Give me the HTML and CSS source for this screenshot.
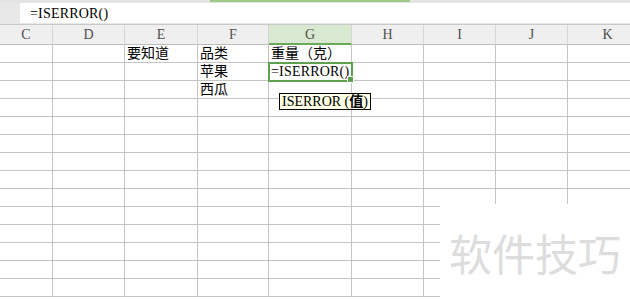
FILE: index.html
```html
<!DOCTYPE html>
<html lang="zh">
<head>
<meta charset="utf-8">
<link rel="stylesheet" href="styles.css">
</head>
<body>
<div class="sheet">
  <div class="topstrip"><div class="tabmark"></div></div>
  <div class="fbar">
    <div class="fleft"></div>
    <div class="finput">=ISERROR()</div>
  </div>
  <div class="row head">
    <div class="c cC">C</div><div class="c cD">D</div><div class="c cE">E</div><div class="c cF">F</div><div class="c cG sel">G</div><div class="c cH">H</div><div class="c cI">I</div><div class="c cJ">J</div><div class="c cK">K</div>
  </div>
  <div class="body">
    <div class="row"><div class="c cC"></div><div class="c cD"></div><div class="c cE">要知道</div><div class="c cF">品类</div><div class="c cG">重量（克）</div><div class="c cH"></div><div class="c cI"></div><div class="c cJ"></div><div class="c cK"></div></div>
    <div class="row"><div class="c cC"></div><div class="c cD"></div><div class="c cE"></div><div class="c cF">苹果</div><div class="c cG edit">=ISERROR()<span class="handle"></span></div><div class="c cH"></div><div class="c cI"></div><div class="c cJ"></div><div class="c cK"></div></div>
    <div class="row"><div class="c cC"></div><div class="c cD"></div><div class="c cE"></div><div class="c cF">西瓜</div><div class="c cG"></div><div class="c cH"></div><div class="c cI"></div><div class="c cJ"></div><div class="c cK"></div></div>
    <div class="row"><div class="c cC"></div><div class="c cD"></div><div class="c cE"></div><div class="c cF"></div><div class="c cG"></div><div class="c cH"></div><div class="c cI"></div><div class="c cJ"></div><div class="c cK"></div></div>
    <div class="row"><div class="c cC"></div><div class="c cD"></div><div class="c cE"></div><div class="c cF"></div><div class="c cG"></div><div class="c cH"></div><div class="c cI"></div><div class="c cJ"></div><div class="c cK"></div></div>
    <div class="row"><div class="c cC"></div><div class="c cD"></div><div class="c cE"></div><div class="c cF"></div><div class="c cG"></div><div class="c cH"></div><div class="c cI"></div><div class="c cJ"></div><div class="c cK"></div></div>
    <div class="row"><div class="c cC"></div><div class="c cD"></div><div class="c cE"></div><div class="c cF"></div><div class="c cG"></div><div class="c cH"></div><div class="c cI"></div><div class="c cJ"></div><div class="c cK"></div></div>
    <div class="row"><div class="c cC"></div><div class="c cD"></div><div class="c cE"></div><div class="c cF"></div><div class="c cG"></div><div class="c cH"></div><div class="c cI"></div><div class="c cJ"></div><div class="c cK"></div></div>
    <div class="row"><div class="c cC"></div><div class="c cD"></div><div class="c cE"></div><div class="c cF"></div><div class="c cG"></div><div class="c cH"></div><div class="c cI"></div><div class="c cJ"></div><div class="c cK"></div></div>
    <div class="row"><div class="c cC"></div><div class="c cD"></div><div class="c cE"></div><div class="c cF"></div><div class="c cG"></div><div class="c cH"></div><div class="c cI"></div><div class="c cJ"></div><div class="c cK"></div></div>
    <div class="row"><div class="c cC"></div><div class="c cD"></div><div class="c cE"></div><div class="c cF"></div><div class="c cG"></div><div class="c cH"></div><div class="c cI"></div><div class="c cJ"></div><div class="c cK"></div></div>
    <div class="row"><div class="c cC"></div><div class="c cD"></div><div class="c cE"></div><div class="c cF"></div><div class="c cG"></div><div class="c cH"></div><div class="c cI"></div><div class="c cJ"></div><div class="c cK"></div></div>
    <div class="row"><div class="c cC"></div><div class="c cD"></div><div class="c cE"></div><div class="c cF"></div><div class="c cG"></div><div class="c cH"></div><div class="c cI"></div><div class="c cJ"></div><div class="c cK"></div></div>
    <div class="row"><div class="c cC"></div><div class="c cD"></div><div class="c cE"></div><div class="c cF"></div><div class="c cG"></div><div class="c cH"></div><div class="c cI"></div><div class="c cJ"></div><div class="c cK"></div></div>
  </div>
  <div class="tip">ISERROR (<b>值</b>)</div>
  <div class="wm">软件技巧</div>
</div>
</body>
</html>
```
FILE: styles.css
```css
html, body { margin: 0; padding: 0; background: #fff; }
.sheet {
  position: relative;
  width: 630px;
  height: 300px;
  overflow: hidden;
  font-family: "Liberation Serif", "Noto Sans CJK SC", serif;
  color: #000;
}
.topstrip { height: 3px; background: #e4e4e4; position: relative; }
.tabmark { position: absolute; left: 210px; top: 0; width: 200px; height: 2px; background: #9cc98a; }
.fbar { height: 21px; display: flex; background: #e8e8e8; border-bottom: 1px solid #c9c9c9; }
.fleft { width: 20px; }
.finput {
  flex: 1;
  background: #fff;
  margin-bottom: 1px;
  padding-left: 10px;
  font-size: 14px;
  letter-spacing: 0.2px;
  line-height: 22px;
}
.row { display: flex; height: 18px; }
.c {
  box-sizing: border-box;
  flex: none;
  height: 18px;
  border-right: 1px solid #c4c4c4;
  border-bottom: 1px solid #c4c4c4;
  font-size: 14px;
  line-height: 18px;
  padding-left: 2px;
  white-space: nowrap;
  position: relative;
}
.head { height: 20px; }
.head .c {
  height: 20px;
  background: #efefef;
  color: #505050;
  font-size: 14px;
  line-height: 20px;
  text-align: center;
  padding: 0;
  border-right: 1px solid #d6d6d6;
  border-bottom: 1px solid #bdbdbd;
}
.head .c.sel {
  background: #d9e9d1;
  border-bottom: 2px solid #6aa85a;
  line-height: 19px;
}
.cC { width: 53px; }
.cD { width: 72px; }
.cE { width: 73px; }
.cF { width: 71px; }
.cG { width: 83px; }
.cH { width: 72px; }
.cI { width: 72px; }
.cJ { width: 72px; }
.cK { width: 80px; border-right: none; }
.edit {
  outline: 2px solid #5f9f52;
  outline-offset: -1px;
  letter-spacing: 0.2px;
  z-index: 2;
  padding-left: 2px;
}
.handle {
  position: absolute;
  right: -3px;
  bottom: -3px;
  width: 5px;
  height: 5px;
  background: #5f9f52;
  border: 1px solid #fff;
}
.tip {
  position: absolute;
  left: 279px;
  top: 93px;
  height: 15px;
  padding: 0 2px;
  background: #ffffe6;
  border: 1px solid #000;
  font-size: 14px;
  line-height: 16px;
  z-index: 3;
}
.tip b { font-weight: 700; }
.wm {
  position: absolute;
  left: 440px;
  top: 204px;
  width: 190px;
  height: 96px;
  background: #fff;
  box-sizing: border-box;
  padding: 22px 0 0 9px;
  font-family: "Noto Sans CJK SC", sans-serif;
  font-size: 43px;
  line-height: 52px;
  color: #dddddd;
  white-space: nowrap;
}
```
